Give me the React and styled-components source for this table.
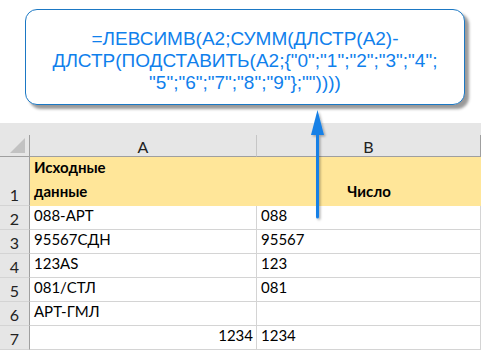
import React from 'react';
import styled, {createGlobalStyle} from 'styled-components';

const GlobalStyle = createGlobalStyle`
    html, body {
        margin: 0;
        padding: 0;
        background: #ffffff;
    }
`;

const Page = styled.div`
    position: relative;
    width: 481px;
    height: 350px;
    overflow: hidden;
    padding-top: 9px;
    box-sizing: border-box;
`;

const Callout = styled.div`
    margin-left: 25px;
    width: 440px;
    height: 96px;
    box-sizing: border-box;
    border: 1.5px solid #1b78c4;
    border-radius: 12px;
    background: #ffffff;
    box-shadow: 4px 4px 3px rgba(0, 0, 0, 0.4);
    display: flex;
    flex-direction: column;
    align-items: center;
    justify-content: center;
    padding-top: 8px;
    font-family: "Liberation Sans", Arial, sans-serif;
    font-size: 19px;
    line-height: 22px;
    color: #0f80ec;
    text-align: center;
`;

const Sheet = styled.div`
    margin-top: 18px;
    display: grid;
    grid-template-columns: 30px 227px 224px;
    grid-template-rows: 12px 22px 49px repeat(6, 24px);
    font-family: Lato, "Liberation Sans", sans-serif;
    font-size: 15px;
    color: #000000;
`;

const TopStrip = styled.div`
    grid-column: 1 / -1;
    background: #e6e6e6;
`;

const Corner = styled.div`
    position: relative;
    background: #e6e6e6;
    border-right: 1px solid #9f9f9f;
    border-bottom: 1px solid #9f9f9f;
`;

const CornerMark = styled.div`
    position: absolute;
    right: 4px;
    bottom: 3px;
    width: 0;
    height: 0;
    border-left: 15px solid transparent;
    border-bottom: 15px solid #c2c2c2;
`;

const ColHead = styled.div`
    background: #e6e6e6;
    border-right: 1px solid ${(p) => (p.last ? '#9f9f9f' : '#c6c6c6')};
    border-bottom: 1px solid #9f9f9f;
    display: flex;
    align-items: center;
    justify-content: center;
    padding-top: 2px;
    font-size: 16px;
    color: #222;
`;

const RowHead = styled.div`
    background: #e6e6e6;
    border-right: 1px solid #9f9f9f;
    border-bottom: 1px solid #d4d4d4;
    display: flex;
    align-items: flex-end;
    justify-content: center;
    padding-bottom: 1px;
    font-size: 16px;
    color: #222;
`;

const Cell = styled.div`
    background: ${(p) => (p.head ? '#ffe699' : '#ffffff')};
    border-right: 1px solid ${(p) => (p.head ? '#ffe699' : '#d4d4d4')};
    border-bottom: 1px solid ${(p) => (p.head ? '#ffe699' : '#d4d4d4')};
    display: flex;
    align-items: flex-end;
    justify-content: ${(p) => p.align || 'flex-start'};
    padding: 0 3px 2px 4px;
    font-weight: ${(p) => (p.head ? 700 : 400)};
    line-height: 24px;
    white-space: pre-line;
`;

const Arrow = styled.svg`
    position: absolute;
    left: 306px;
    top: 108px;
    overflow: visible;
`;

const rows = [
    ['088-АРТ', '088'],
    ['95567СДН', '95567'],
    ['123AS', '123'],
    ['081/СТЛ', '081'],
    ['АРТ-ГМЛ', ''],
    ['1234', '1234', true],
];

export default function App() {
    return (
        <Page>
            <GlobalStyle />
            <Callout>
                <div>=ЛЕВСИМВ(A2;СУММ(ДЛСТР(A2)-</div>
                <div>ДЛСТР(ПОДСТАВИТЬ(A2;{'{'}"0";"1";"2";"3";"4";</div>
                <div>"5";"6";"7";"8";"9"{'}'};""))))</div>
            </Callout>
            <Sheet>
                <TopStrip />
                <Corner><CornerMark /></Corner>
                <ColHead>A</ColHead>
                <ColHead last>B</ColHead>
                <RowHead>1</RowHead>
                <Cell head>{'Исходные\nданные'}</Cell>
                <Cell head align="center">Число</Cell>
                {rows.map(([a, b, num], i) => (
                    <React.Fragment key={a}>
                        <RowHead>{i + 2}</RowHead>
                        <Cell align={num ? 'flex-end' : 'flex-start'}>{a}</Cell>
                        <Cell>{b}</Cell>
                    </React.Fragment>
                ))}
            </Sheet>
            <Arrow width="24" height="114" viewBox="0 0 24 114">
                <defs>
                    <filter id="arrow-shadow" x="-50%" y="-10%" width="200%" height="130%">
                        <feDropShadow dx="1.5" dy="1.5" stdDeviation="1" floodColor="#000" floodOpacity="0.3" />
                    </filter>
                </defs>
                <g filter="url(#arrow-shadow)">
                    <line x1="11.5" y1="22" x2="11.5" y2="109" stroke="#1680e6" strokeWidth="3" strokeLinecap="round" />
                    <polygon points="11.5,2 5,27 18,27" fill="#1680e6" />
                </g>
            </Arrow>
        </Page>
    );
}
